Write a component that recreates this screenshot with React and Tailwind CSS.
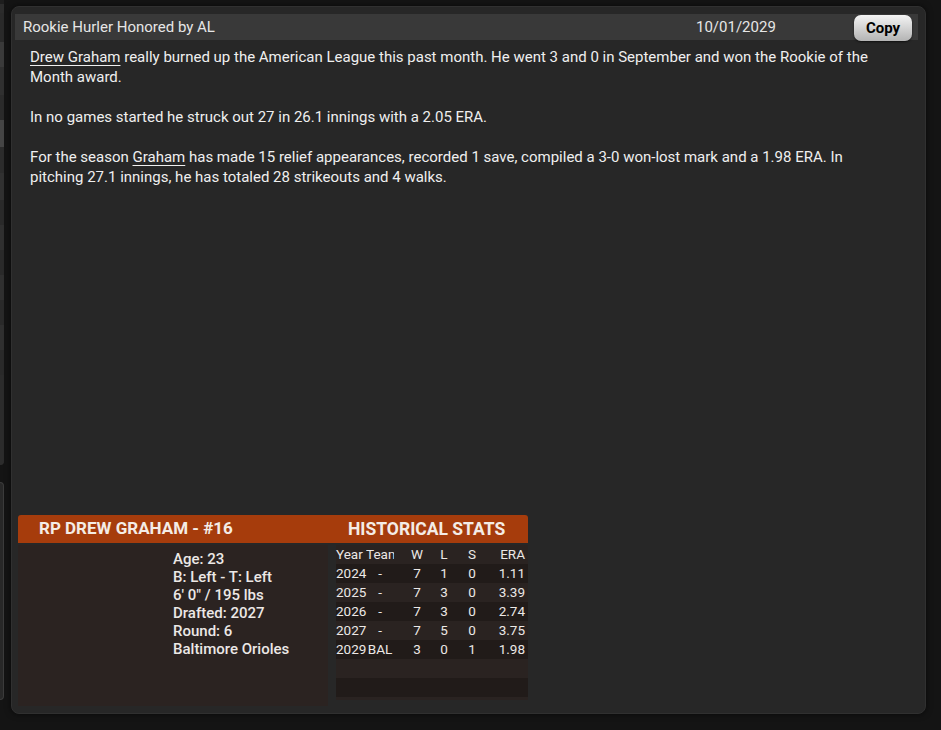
import React from "react";

const rows = [
  ["2024", "-", "7", "1", "0", "1.11"],
  ["2025", "-", "7", "3", "0", "3.39"],
  ["2026", "-", "7", "3", "0", "2.74"],
  ["2027", "-", "7", "5", "0", "3.75"],
  ["2029", "BAL", "3", "0", "1", "1.98"],
  ["", "", "", "", "", ""],
  ["", "", "", "", "", ""],
];

function Row({ r, dark }) {
  return (
    <div className={`flex h-[19px] items-center ${dark ? "bg-[#211b19]" : ""}`}>
      <div className="w-[30px] whitespace-nowrap">{r[0]}</div>
      <div className="w-[28px] overflow-hidden whitespace-nowrap text-center">{r[1]}</div>
      <div className="w-[8px]" />
      <div className="w-[30px] text-center">{r[2]}</div>
      <div className="w-[24px] text-center">{r[3]}</div>
      <div className="w-[32px] text-center">{r[4]}</div>
      <div className="w-[40px] pr-[3px] text-right">{r[5]}</div>
    </div>
  );
}

export default function App() {
  return (
    <div className="w-[941px] h-[730px] bg-[#141414] flex overflow-hidden font-['Roboto',sans-serif]">
      {/* left sliver of background windows */}
      <div className="w-[4px] flex flex-col shrink-0">
        <div className="h-[465px] rounded-br-[5px] bg-[#2a2a2a] flex flex-col overflow-hidden">
          <div className="h-[4px] bg-[#1e1e1e]" />
          <div className="h-[9px] bg-[#2c2c2c]" />
          <div className="h-[29px] bg-[#2a2a2a]" />
          <div className="h-[25px] bg-[#3a3a3a]" />
          <div className="h-[28px] bg-[#303030]" />
          <div className="h-[25px] bg-[#2b2b2b]" />
          <div className="h-[27px] bg-[#454545]" />
          <div className="h-[26px] bg-[#2c2c2c]" />
          <div className="h-[27px] bg-[#313131]" />
          <div className="h-[25px] bg-[#2a2a2a]" />
          <div className="h-[25px] bg-[#303030]" />
          <div className="h-[25px] bg-[#2a2a2a]" />
          <div className="h-[25px] bg-[#303030]" />
          <div className="h-[25px] bg-[#2a2a2a]" />
          <div className="h-[25px] bg-[#303030]" />
          <div className="h-[25px] bg-[#2a2a2a]" />
          <div className="flex-1 bg-[#2c2c2c]" />
        </div>
        <div className="mt-[17px] h-[218px] rounded-r-[5px] bg-[#282828] border-r border-y border-[#3c3c3c]" />
      </div>

      {/* main panel */}
      <div className="ml-[7px] mt-[6px] w-[915px] h-[708px] shrink-0 rounded-[8px] bg-[#272727] border border-[#303030] shadow-[0_0_6px_rgba(0,0,0,0.6)] flex flex-col">
        <div className="mt-[7px] ml-[3px] mr-[7px] h-[26px] bg-[#393939] flex items-center text-[15px] text-[#e6e6e6]">
          <div className="pl-[8px] w-[681px]">Rookie Hurler Honored by AL</div>
          <div className="w-[158px]">10/01/2029</div>
          <button className="mt-[2px] w-[58px] h-[26px] rounded-[7px] bg-gradient-to-b from-[#f4f4f4] to-[#b4b4b4] text-black font-bold text-[15px] shadow-[0_1px_2px_rgba(0,0,0,0.6)]">
            Copy
          </button>
        </div>

        <div className="mt-[7px] pl-[18px] pr-[40px] text-[15px] leading-[20px] text-[#efefef] flex flex-col gap-[20px]">
          <p>
            <span className="underline underline-offset-[3px]">Drew Graham</span> really burned up the American League this past month. He went 3 and 0 in September and won the Rookie of the Month award.
          </p>
          <p>In no games started he struck out 27 in 26.1 innings with a 2.05 ERA.</p>
          <p>
            For the season <span className="underline underline-offset-[3px]">Graham</span> has made 15 relief appearances, recorded 1 save, compiled a 3-0 won-lost mark and a 1.98 ERA. In pitching 27.1 innings, he has totaled 28 strikeouts and 4 walks.
          </p>
        </div>

        <div className="flex-1" />

        {/* player card */}
        <div className="ml-[6px] mb-[7px] w-[510px] flex flex-col">
          <div className="h-[28px] rounded-t-[3px] bg-[#a63c0c] flex items-center text-[17px] font-bold text-[#f4ece6]">
            <div className="w-[330px] pl-[21px]">RP DREW GRAHAM - #16</div>
            <div className="text-[17.5px]">HISTORICAL STATS</div>
          </div>
          <div className="mt-[2px] flex h-[161px]">
            <div className="w-[310px] bg-[#2b2321] pl-[155px] pt-[5px] text-[15px] leading-[18px] font-medium text-[#ece8e6]">
              <div>Age: 23</div>
              <div>B: Left - T: Left</div>
              <div>6' 0" / 195 lbs</div>
              <div>Drafted: 2027</div>
              <div>Round: 6</div>
              <div>Baltimore Orioles</div>
            </div>
            <div className="ml-[8px] w-[192px] h-[155px] bg-[#2a2321] text-[13.5px] text-[#ece8e6] flex flex-col">
              <Row r={["Year", "Team", "W", "L", "S", "ERA"]} />
              {rows.map((r, i) => (
                <Row key={i} r={r} dark={i % 2 === 0} />
              ))}
            </div>
          </div>
        </div>
      </div>
      <div className="flex-1" />
    </div>
  );
}
